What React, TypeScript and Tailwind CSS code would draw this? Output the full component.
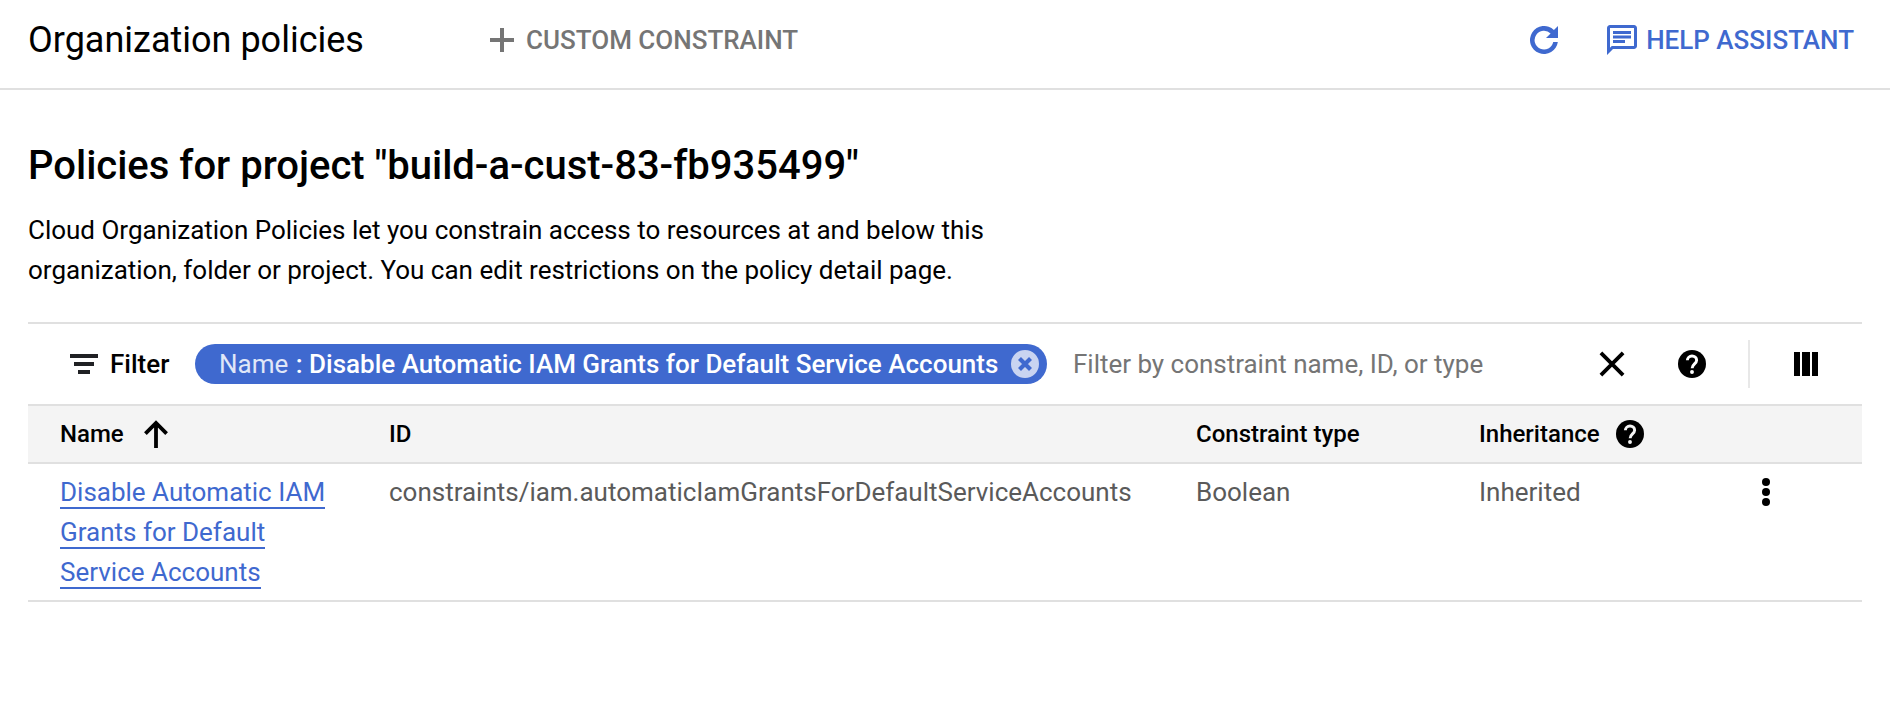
import type { ReactNode } from "react";

const policies = [
  {
    nameLines: ["Disable Automatic IAM", "Grants for Default", "Service Accounts"],
    id: "constraints/iam.automaticIamGrantsForDefaultServiceAccounts",
    type: "Boolean",
    inheritance: "Inherited",
  },
];

function HelpIcon({ mark }: { mark: string }) {
  return (
    <svg className="size-7 shrink-0" viewBox="2 2 20 20">
      <circle cx="12" cy="12" r="10" />
      <path
        d="M8.7 9.4C8.7 7.6 10.2 6.3 12 6.3s3.3 1.2 3.3 3c0 2.5-3.2 2.8-3.2 5.7"
        fill="none"
        stroke={mark}
        strokeWidth="2.1"
      />
      <circle cx="12" cy="17.7" r="1.4" fill={mark} />
    </svg>
  );
}

function Heading({ children }: { children: ReactNode }) {
  return <div className="flex items-center text-[24px] leading-[56px] font-medium text-black">{children}</div>;
}

export default function App() {
  return (
    <div className="h-[718px] w-full overflow-hidden bg-white font-['Roboto','Liberation_Sans',sans-serif] text-[26px] text-black">
      <header className="flex h-[90px] items-center border-b-2 border-[#e0e0e0] pb-2 pl-7">
        <h1 className="w-[462px] text-[36px] leading-10 font-normal">Organization policies</h1>
        <button className="flex items-center text-[#757575]">
          <svg className="size-6" viewBox="0 0 24 24" fill="currentColor">
            <path d="M10 0h4v10h10v4H14v10h-4V14H0v-4h10z" />
          </svg>
          <span className="ml-3 font-medium">CUSTOM CONSTRAINT</span>
        </button>
        <div className="ml-auto flex items-center pr-9 text-[#3f69cf]">
          <svg className="mr-[46px] size-7" viewBox="-14 -14 28 28" fill="currentColor">
            <path d="M13.85 2A14 14 0 1 1 9.9-9.9L14-14V-2H2L6.6-6.6A9.4 9.4 0 1 0 9.2 2z" />
          </svg>
          <svg className="size-9" viewBox="0 0 24 24" fill="currentColor">
            <path d="M4 4h16v12H5.17L4 17.17V4m0-2c-1.1 0-1.99.9-1.99 2L2 22l4-4h14c1.1 0 2-.9 2-2V4c0-1.1-.9-2-2-2H4zm2 10h8v2H6v-2zm0-3h12v2H6V9zm0-3h12v2H6V6z" />
          </svg>
          <span className="ml-[6px] font-medium">HELP ASSISTANT</span>
        </div>
      </header>

      <main className="px-7 pt-[52px]">
        <h2 className="text-[40px] leading-[48px] font-medium tracking-[-0.01px]">
          Policies for project "build-a-cust-83-fb935499"
        </h2>
        <p className="mt-5 w-[1000px] leading-10 tracking-[-0.01px]">
          Cloud Organization Policies let you constrain access to resources at and below this
          <br />
          organization, folder or project. You can edit restrictions on the policy detail page.
        </p>

        <section className="mt-8 border-t-2 border-[#e0e0e0]">
          <div className="flex h-20 items-center pl-[42px]">
            <svg className="h-5 w-7 text-[#202124]" viewBox="0 0 28 20" fill="currentColor">
              <path d="M0 0h28v4H0zM4 8h20v4H4zM8 16h12v4H8z" />
            </svg>
            <span className="ml-3 w-[85px] font-medium">Filter</span>
            <div className="flex h-10 w-[852px] items-center justify-between rounded-full bg-[#3f69cf] pr-2 pl-6 font-medium whitespace-nowrap text-white">
              <span>
                <span className="mr-px font-normal text-[#e0e7f8]">Name</span> : Disable Automatic IAM Grants for Default Service Accounts
              </span>
              <svg className="size-7" viewBox="0 0 28 28">
                <circle cx="14" cy="14" r="14" fill="#c9d4f1" />
                <path d="M8.5 8.5l11 11m0-11l-11 11" stroke="#3f69cf" strokeWidth="4.2" />
              </svg>
            </div>
            <span className="ml-[26px] tracking-[-0.02px] text-[#757575]">Filter by constraint name, ID, or type</span>
            <div className="ml-auto flex items-center pr-11">
              <svg className="size-[26px]" viewBox="0 0 26 26" stroke="black" strokeWidth="3.8">
                <path d="M1.9 1.9l22.2 22.2m0-22.2L1.9 24.1" />
              </svg>
              <div className="ml-[53px] flex">
                <HelpIcon mark="#ffffff" />
              </div>
              <div className="ml-[42px] h-12 w-0.5 bg-[#e8e8e8]" />
              <svg className="ml-11 size-6" viewBox="0 0 24 24">
                <path d="M0 0h6v24H0zM8 0h8v24H8zM18 0h6v24h-6z" />
              </svg>
            </div>
          </div>

          <div className="grid grid-cols-[329px_807px_283px_283px_1fr] border-y-2 border-[#e0e0e0] bg-[#f4f4f4] pl-8">
            <Heading>
              Name
              <svg className="ml-5 h-7 w-6" viewBox="0 0 24 28" fill="none" stroke="black" strokeWidth="3.8">
                <path d="M12 28V3M1.4 13.6L12 3l10.6 10.6" />
              </svg>
            </Heading>
            <Heading>ID</Heading>
            <Heading>Constraint type</Heading>
            <Heading>
              <span className="mr-4">Inheritance</span>
              <HelpIcon mark="#f4f4f4" />
            </Heading>
          </div>

          {policies.map((policy) => (
            <div
              key={policy.id}
              className="grid grid-cols-[329px_807px_283px_283px_1fr] border-b-2 border-[#e0e0e0] pt-2 pb-2 pl-8 leading-10 text-[#5a5a5a]"
            >
              <a className="text-[#3f69cf]">
                {policy.nameLines.map((line) => (
                  <span key={line} className="block">
                    <span className="border-b-2 border-[#3f69cf]">{line}</span>
                  </span>
                ))}
              </a>
              <span className="tracking-[-0.01px]">{policy.id}</span>
              <span>{policy.type}</span>
              <span>{policy.inheritance}</span>
              <svg className="mt-[6px] h-7 w-2" viewBox="0 0 8 28">
                <circle cx="4" cy="4" r="4" />
                <circle cx="4" cy="14" r="4" />
                <circle cx="4" cy="24" r="4" />
              </svg>
            </div>
          ))}
        </section>
      </main>
    </div>
  );
}
